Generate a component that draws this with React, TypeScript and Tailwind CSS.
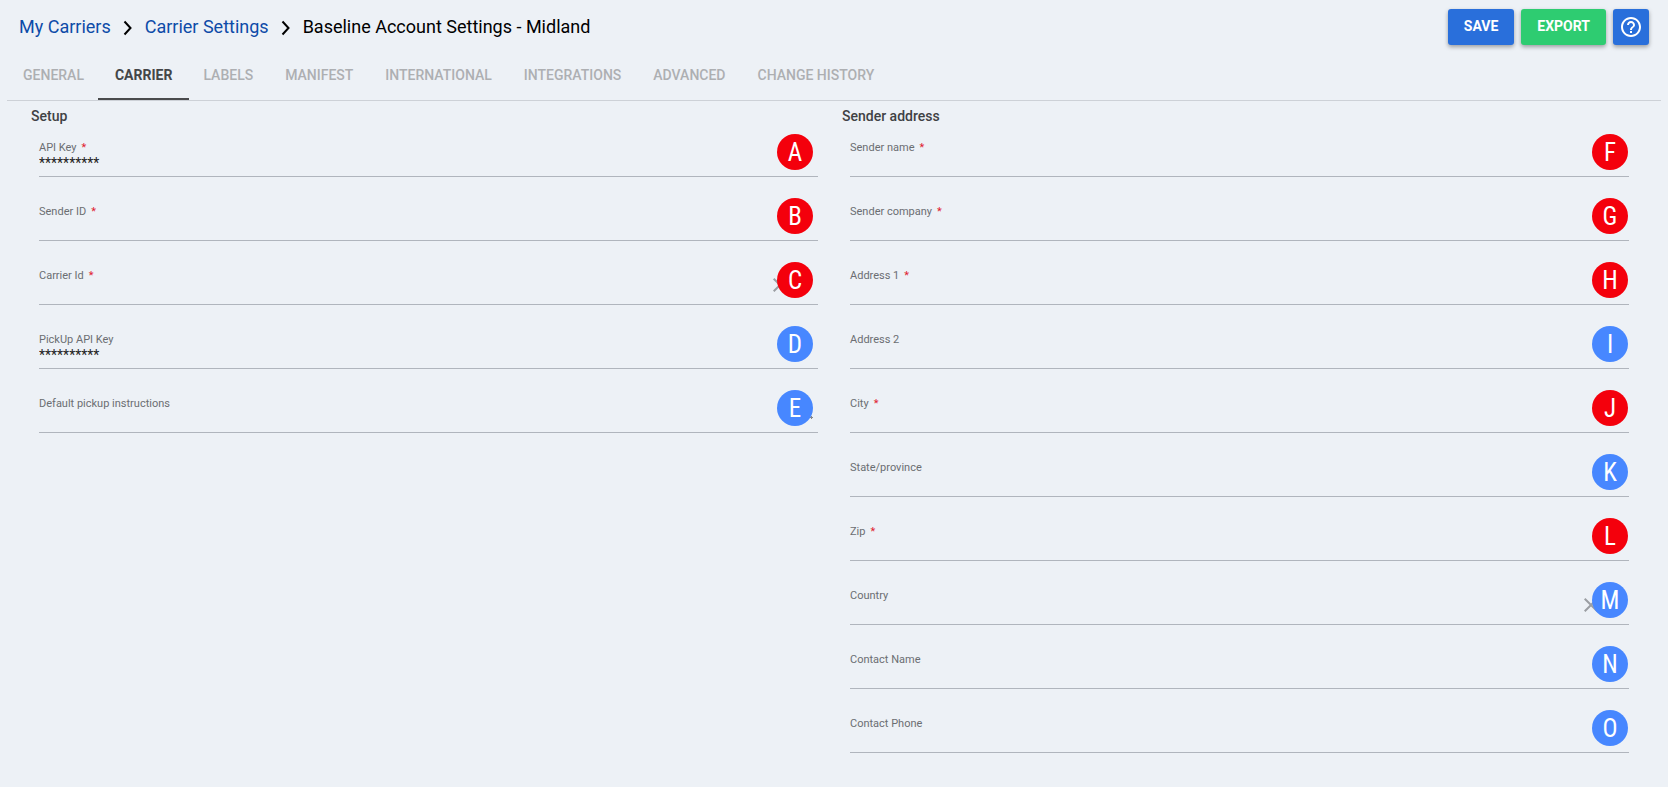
import React, { useState } from 'react';

interface Field {
  id: string;
  label: string;
  marker: string;
  required?: boolean;
  type?: 'text' | 'select' | 'textarea';
  value?: string;
}

interface FieldColumnProps {
  title: string;
  fields: Field[];
  markerClass: string;
}

const TABS = [
  'General',
  'Carrier',
  'Labels',
  'Manifest',
  'International',
  'Integrations',
  'Advanced',
  'Change history',
];

const SETUP_FIELDS: Field[] = [
  { id: 'api-key', label: 'API Key', marker: 'A', required: true, value: '**********' },
  { id: 'sender-id', label: 'Sender ID', marker: 'B', required: true },
  { id: 'carrier-id', label: 'Carrier Id', marker: 'C', required: true, type: 'select' },
  { id: 'pickup-api-key', label: 'PickUp API Key', marker: 'D', value: '**********' },
  { id: 'pickup-instructions', label: 'Default pickup instructions', marker: 'E', type: 'textarea' },
];

const SENDER_FIELDS: Field[] = [
  { id: 'sender-name', label: 'Sender name', marker: 'F', required: true },
  { id: 'sender-company', label: 'Sender company', marker: 'G', required: true },
  { id: 'address-1', label: 'Address 1', marker: 'H', required: true },
  { id: 'address-2', label: 'Address 2', marker: 'I' },
  { id: 'city', label: 'City', marker: 'J', required: true },
  { id: 'state', label: 'State/province', marker: 'K' },
  { id: 'zip', label: 'Zip', marker: 'L', required: true },
  { id: 'country', label: 'Country', marker: 'M', type: 'select' },
  { id: 'contact-name', label: 'Contact Name', marker: 'N' },
  { id: 'contact-phone', label: 'Contact Phone', marker: 'O' },
];

const CONTROL_CLASS =
  'block h-[22px] w-full appearance-none resize-none rounded-none border-0 border-b border-[#b0b5bd] bg-transparent p-0 pb-[5px] text-sm leading-4 text-[#212121] outline-none';

const Chevron = () => (
  <svg className="mx-3 mt-[2px] h-4 w-[10px] shrink-0" viewBox="0 0 10 16" fill="none" stroke="#000" strokeWidth="2" aria-hidden="true">
    <path d="M1.5 1.5l6 6.500-6 6.500" />
  </svg>
);

const FieldRow: React.FC<{ field: Field; markerClass: string }> = ({ field, markerClass }) => {
  const [value, setValue] = useState(field.value ?? '');

  return (
    <div className="relative h-16 pt-5">
      <label htmlFor={field.id} className="block h-[14px] text-[11px] leading-[14px] text-[#6b6e72]">
        {field.label}
        {field.required && <span className="ml-[5px] text-[#e0202f]">*</span>}
      </label>

      {field.type === 'select' ? (
        <select id={field.id} value={value} onChange={(e) => setValue(e.target.value)} className={CONTROL_CLASS}>
          <option value=""></option>
        </select>
      ) : field.type === 'textarea' ? (
        <textarea id={field.id} rows={1} value={value} onChange={(e) => setValue(e.target.value)} className={CONTROL_CLASS} />
      ) : (
        <input id={field.id} type="text" value={value} onChange={(e) => setValue(e.target.value)} className={CONTROL_CLASS} />
      )}

      {field.type === 'select' && (
        <button type="button" aria-label={`Clear ${field.label}`} onClick={() => setValue('')} className="absolute right-[26px] bottom-4 text-[#9b9ea3]">
          <svg className="size-6" viewBox="0 0 24 24" fill="currentColor">
            <path d="M19 6.41 17.59 5 12 10.59 6.41 5 5 6.41 10.59 12 5 17.59 6.41 19 12 13.41 17.59 19 19 17.59 13.41 12z" />
          </svg>
        </button>
      )}
      {field.type === 'textarea' && (
        <svg className="absolute right-[5px] bottom-5 size-2" viewBox="0 0 8 8" stroke="#85888d" aria-hidden="true">
          <path d="M5 4.5h3M6.5 3v3" />
        </svg>
      )}

      <span
        className={`absolute bottom-[15px] flex size-9 items-center justify-center rounded-full pt-px font-['Roboto_Condensed','Roboto',sans-serif] text-[25px] leading-none text-white ${markerClass} ${
          field.required ? 'bg-[#f4000c]' : 'bg-[#4787ff]'
        }`}
      >
        {field.marker}
      </span>
    </div>
  );
};

const FieldColumn: React.FC<FieldColumnProps> = ({ title, fields, markerClass }) => (
  <section>
    <h2 className="h-[13px] text-sm leading-4 font-medium text-[#3f4144]">{title}</h2>
    <div className="px-2">
      {fields.map((field) => (
        <FieldRow key={field.id} field={field} markerClass={markerClass} />
      ))}
    </div>
  </section>
);

export default function App() {
  const [activeTab, setActiveTab] = useState('Carrier');

  return (
    <div className="min-h-screen bg-[#edf1f6] font-['Roboto',sans-serif]">
      <header className="flex items-center justify-between px-[19px] pt-[9px]">
        <nav aria-label="Breadcrumb" className="flex items-center text-lg leading-6">
          <a href="#carriers" className="text-[#0d4ba8]">My Carriers</a>
          <Chevron />
          <a href="#settings" className="text-[#0d4ba8]">Carrier Settings</a>
          <Chevron />
          <h1 className="text-black">Baseline Account Settings - Midland</h1>
        </nav>

        <div className="flex gap-[7px] text-sm font-bold text-white">
          <button type="button" className="h-9 rounded-[3px] bg-[#296fdb] px-4 pb-[2px] shadow-[0_2px_4px_rgba(0,0,0,0.35)]">SAVE</button>
          <button type="button" className="h-9 rounded-[3px] bg-[#2ecc71] px-4 pb-[2px] shadow-[0_2px_4px_rgba(0,0,0,0.35)]">EXPORT</button>
          <button type="button" aria-label="Help" className="flex size-9 items-center justify-center rounded-[3px] bg-[#296fdb] shadow-[0_2px_4px_rgba(0,0,0,0.35)]">
            <svg className="size-6" viewBox="0 0 24 24" fill="currentColor">
              <path d="M11 18h2v-2h-2v2zm1-16C6.48 2 2 6.48 2 12s4.48 10 10 10 10-4.48 10-10S17.52 2 12 2zm0 18c-4.41 0-8-3.59-8-8s3.59-8 8-8 8 3.59 8 8-3.59 8-8 8zm0-14c-2.21 0-4 1.79-4 4h2c0-1.1.9-2 2-2s2 .9 2 2c0 2-3 1.75-3 5h2c0-2.25 3-2.5 3-5 0-2.21-1.79-4-4-4z" />
            </svg>
          </button>
        </div>
      </header>

      <div role="tablist" className="mx-[7px] mt-[7px] flex border-b border-[#cdd1d7]">
        {TABS.map((tab) => (
          <button
            key={tab}
            type="button"
            role="tab"
            aria-selected={tab === activeTab}
            onClick={() => setActiveTab(tab)}
            className={`h-12 border-b-2 text-sm uppercase ${
              tab === activeTab
                ? '-mx-[2px] border-[#4a4b4d] px-[17px] font-bold text-[#444648]'
                : 'border-transparent px-4 font-medium text-[#adafb2]'
            }`}
          >
            {tab}
          </button>
        ))}
      </div>

      <main className="grid grid-cols-2 gap-4 px-[31px] pt-[7px]">
        <FieldColumn title="Setup" fields={SETUP_FIELDS} markerClass="right-[5px]" />
        <FieldColumn title="Sender address" fields={SENDER_FIELDS} markerClass="right-px" />
      </main>
    </div>
  );
}
